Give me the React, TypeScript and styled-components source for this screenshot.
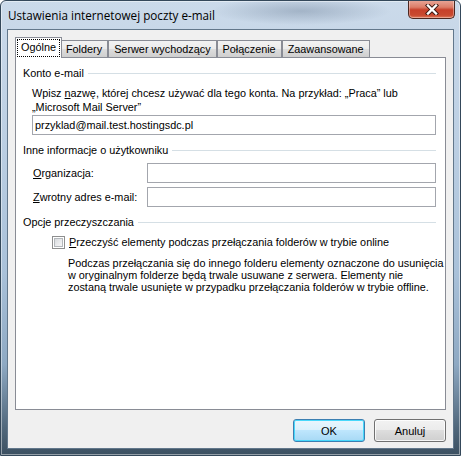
import React from 'react';
import styled, { createGlobalStyle } from 'styled-components';

const GlobalStyle = createGlobalStyle`
	html, body {
		margin: 0;
		padding: 0;
		background: #ffffff;
	}
`;

const Window = styled.div`
	width: 461px;
	height: 456px;
	box-sizing: border-box;
	border: 1px solid #34485a;
	border-radius: 6px 6px 0 0;
	background:
		radial-gradient(ellipse 90px 14px at 300px 10px, rgba(90, 110, 135, 0.35), transparent),
		linear-gradient(180deg, #cbdaea 0%, #bccfe3 30%, #a9c1d9 60%, #8ea9c3 80%, #50677b 94%, #3c5061 100%);
	box-shadow: inset 0 0 0 1px rgba(255, 255, 255, 0.45);
	display: flex;
	flex-direction: column;
	font-family: 'Liberation Sans', Arial, sans-serif;
	overflow: hidden;
`;

const TitleBar = styled.div`
	height: 28px;
	display: flex;
	align-items: flex-start;
	padding-left: 7px;
	padding-right: 6px;
`;

const Title = styled.div`
	font-family: 'Open Sans', 'Noto Sans', sans-serif;
	font-size: 11.7px;
	color: #000;
	line-height: 28px;
	flex: 1;
`;

const CloseButton = styled.div`
	width: 47px;
	height: 19px;
	margin-top: -1px;
	margin-right: -1px;
	box-sizing: border-box;
	border: 1px solid #4b2720;
	border-top: none;
	border-radius: 0 0 5px 5px;
	background: linear-gradient(180deg, #e9a99b 0%, #dc7d68 40%, #c7402a 55%, #c94a30 85%, #e07a5c 100%);
	box-shadow: inset 0 0 0 1px rgba(255, 255, 255, 0.35);
	display: flex;
	align-items: center;
	justify-content: center;
`;

const Client = styled.div`
	flex: 1;
	margin: 0 6px 6px 6px;
	border: 1px solid #62778b;
	background: #f0f0f0;
	padding: 7px 7px 6px 7px;
	display: flex;
	flex-direction: column;
	color: #000;
	font-size: 10.85px;
`;

const TabRow = styled.div`
	height: 21px;
	display: flex;
	align-items: flex-end;
	padding-left: 2px;
	margin-bottom: -1px;
	position: relative;
	z-index: 1;
`;

const Tab = styled.div<{ $active?: boolean }>`
	box-sizing: border-box;
	height: ${(p) => (p.$active ? '21px' : '18px')};
	padding: ${(p) => (p.$active ? '1px 1px 0 1px' : '0 5px')};
	margin: ${(p) => (p.$active ? '0 -2px' : '0')};
	border: 1px solid #898c95;
	border-bottom: ${(p) => (p.$active ? 'none' : '1px solid #898c95')};
	background: ${(p) =>
		p.$active ? '#ffffff' : 'linear-gradient(180deg, #f2f2f2 0%, #ebebeb 50%, #dddddd 50%, #cfcfcf 100%)'};
	position: relative;
	z-index: ${(p) => (p.$active ? 2 : 1)};
	display: flex;
	align-items: ${(p) => (p.$active ? 'flex-start' : 'center')};
	white-space: nowrap;
`;

const FocusRect = styled.span`
	border: 1px dotted #000;
	padding: 1px 3px 2px 3px;
	line-height: 13px;
`;

const Panel = styled.div`
	flex: 1;
	background: #ffffff;
	border: 1px solid #898c95;
	padding: 9px 9px 0 7px;
	display: flex;
	flex-direction: column;
	white-space: nowrap;
`;

const GroupHeader = styled.div<{ $gap?: number }>`
	display: flex;
	align-items: center;
	gap: 4px;
	line-height: 13px;
	margin-top: ${(p) => p.$gap ?? 0}px;
	&::after {
		content: '';
		flex: 1;
		height: 1px;
		background: #d5dfe5;
	}
`;

const GroupBody = styled.div<{ $indent: number }>`
	padding-left: ${(p) => p.$indent}px;
	display: flex;
	flex-direction: column;
`;

const Note = styled.p`
	margin: 6px 0 1px 0;
	line-height: 14px;
`;

const TextBox = styled.div`
	height: 20px;
	box-sizing: border-box;
	border: 1px solid #a3a6ad;
	background: #fff;
	padding: 0 2px;
	line-height: 18px;
	overflow: hidden;
`;

const FieldGrid = styled.div`
	display: grid;
	grid-template-columns: 114px 1fr;
	row-gap: 4px;
	align-items: center;
	margin-top: 6px;
`;

const Accel = styled.span`
	text-decoration: underline;
`;

const CheckRow = styled.label`
	display: flex;
	align-items: center;
	gap: 4px;
	margin-top: 7px;
	line-height: 13px;
`;

const CheckBox = styled.span`
	width: 13px;
	height: 13px;
	box-sizing: border-box;
	border: 1px solid #8e8f8f;
	background: #fff;
	padding: 1px;
	display: flex;
	&::after {
		content: '';
		flex: 1;
		border: 1px solid #b4b8bc;
		background: linear-gradient(135deg, #d8dbde 0%, #ebecee 60%, #f6f6f6 100%);
	}
`;

const Description = styled.p`
	margin: 8px 0 0 16px;
	line-height: 12px;
`;

const Footer = styled.div`
	display: flex;
	justify-content: flex-end;
	gap: 9px;
	margin-top: 9px;
`;

const Button = styled.button<{ $default?: boolean }>`
	width: 72px;
	height: 23px;
	box-sizing: border-box;
	border-radius: 3px;
	font-family: 'Liberation Sans', Arial, sans-serif;
	font-size: 11px;
	color: #000;
	padding: 0;
	border: 1px solid ${(p) => (p.$default ? '#3c7fb1' : '#707070')};
	background: ${(p) =>
		p.$default
			? 'linear-gradient(180deg, #eaf6fd 0%, #d9f0fc 50%, #bee6fd 50%, #a7d9f5 100%)'
			: 'linear-gradient(180deg, #f2f2f2 0%, #ebebeb 50%, #dddddd 50%, #cfcfcf 100%)'};
	box-shadow: inset 0 0 0 1px ${(p) => (p.$default ? '#48d8fb' : 'rgba(255,255,255,0.8)')};
`;

const CloseGlyph = () => (
	<svg width="14" height="11" viewBox="0 0 14 11">
		<path d="M3 1.5 L11 9.5 M11 1.5 L3 9.5" stroke="#3a1812" strokeWidth="4.2" strokeLinecap="square" />
		<path d="M3 1.5 L11 9.5 M11 1.5 L3 9.5" stroke="#ffffff" strokeWidth="2.4" strokeLinecap="square" />
	</svg>
);

const tabs = ['Ogólne', 'Foldery', 'Serwer wychodzący', 'Połączenie', 'Zaawansowane'];

const App = () => {
	return (
		<>
			<GlobalStyle />
			<Window>
				<TitleBar>
					<Title>Ustawienia internetowej poczty e-mail</Title>
					<CloseButton>
						<CloseGlyph />
					</CloseButton>
				</TitleBar>

				<Client>
					<TabRow>
						{tabs.map((name, index) => (
							<Tab key={name} $active={index === 0}>
								{index === 0 ? <FocusRect>{name}</FocusRect> : name}
							</Tab>
						))}
					</TabRow>

					<Panel>
						<GroupHeader>Konto e-mail</GroupHeader>
						<GroupBody $indent={9}>
							<Note>
								Wpisz <Accel>n</Accel>azwę, której chcesz używać dla tego konta. Na przykład: „Praca” lub
								<br />
								„Microsoft Mail Server”
							</Note>
							<TextBox>przyklad@mail.test.hostingsdc.pl</TextBox>
						</GroupBody>

						<GroupHeader $gap={9}>Inne informacje o użytkowniku</GroupHeader>
						<GroupBody $indent={10}>
							<FieldGrid>
								<span>
									<Accel>O</Accel>rganizacja:
								</span>
								<TextBox />
								<span>
									<Accel>Z</Accel>wrotny adres e-mail:
								</span>
								<TextBox />
							</FieldGrid>
						</GroupBody>

						<GroupHeader $gap={9}>Opcje przeczyszczania</GroupHeader>
						<GroupBody $indent={29}>
							<CheckRow>
								<CheckBox />
								<span>
									<Accel>P</Accel>rzeczyść elementy podczas przełączania folderów w trybie online
								</span>
							</CheckRow>
							<Description>
								Podczas przełączania się do innego folderu elementy oznaczone do usunięcia
								<br />
								w oryginalnym folderze będą trwale usuwane z serwera. Elementy nie
								<br />
								zostaną trwale usunięte w przypadku przełączania folderów w trybie offline.
							</Description>
						</GroupBody>
					</Panel>

					<Footer>
						<Button $default>OK</Button>
						<Button>Anuluj</Button>
					</Footer>
				</Client>
			</Window>
		</>
	);
};

export default App;
